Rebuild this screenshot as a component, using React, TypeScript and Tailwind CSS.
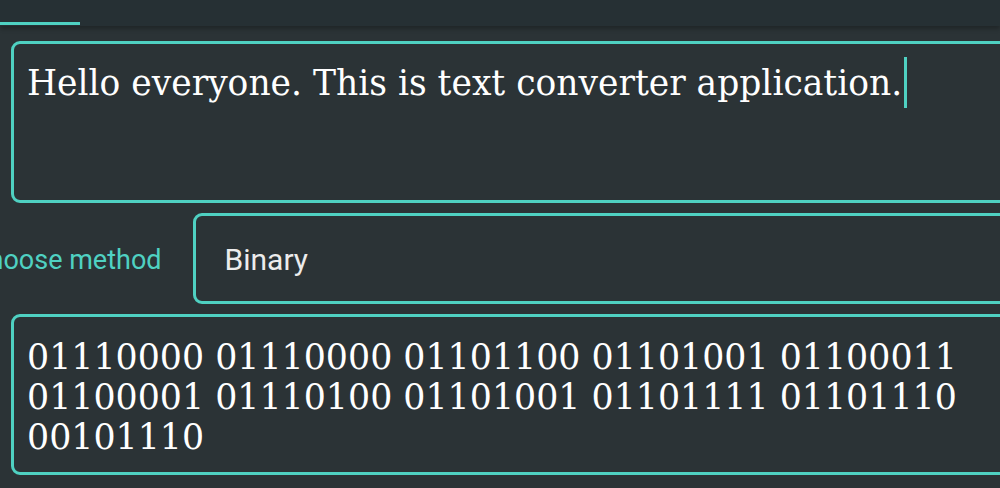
export default function App() {
  return (
    <div className="w-[1000px] h-[488px] overflow-hidden bg-[#2b3336] relative">
      <div className="h-[26px] bg-[#263034] relative shadow-[0_3px_4px_rgba(0,0,0,0.25)]">
        <div className="absolute left-0 bottom-[1px] w-[80px] h-[3px] bg-[#4fd1c2]" />
      </div>
      <div className="flex flex-col pl-[11px] pt-[15px] gap-[10px] w-[1060px]">
        <div className="h-[162px] border-[3px] border-[#4fd1c2] rounded-[9px] px-[13px] pt-[13px]">
          <p className="text-[34.5px] leading-[50px] text-white [font-family:'DejaVu_Serif',serif] flex items-center">
            Hello everyone. This is text converter application.
            <span className="inline-block w-[3px] h-[51px] bg-[#4fd1c2] ml-[2px]" />
          </p>
        </div>
        <div className="flex items-center gap-[31px] -ml-[40px]">
          <span className="text-[27px] text-[#4fd1c2] [font-family:Roboto,sans-serif] whitespace-nowrap pt-[3px]">Choose method</span>
          <div className="flex-1 h-[91px] border-[3px] border-[#4fd1c2] rounded-[9px] flex items-center px-[29px] pt-[2px]">
            <span className="text-[30px] text-[#ececec] [font-family:Roboto,sans-serif]">Binary</span>
          </div>
        </div>
        <div className="h-[161px] border-[3px] border-[#4fd1c2] rounded-[9px] px-[13px] pt-[20px]">
          <p className="text-[34.8px] leading-[40px] text-white [font-family:'DejaVu_Serif',serif] w-[960px]">
            01110000 01110000 01101100 01101001 01100011 01100001 01110100 01101001 01101111 01101110 00101110
          </p>
        </div>
      </div>
    </div>
  );
}
